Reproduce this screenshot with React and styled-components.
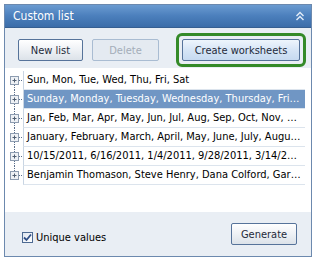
import React from 'react';
import styled, { createGlobalStyle } from 'styled-components';

const GlobalStyle = createGlobalStyle`
  html, body {
    margin: 0;
    padding: 0;
    background: #ffffff;
  }
  body {
    font-family: 'DejaVu Sans Condensed', 'DejaVu Sans', 'Liberation Sans', sans-serif;
    font-size: 11px;
  }
`;

const lists = [
  'Sun, Mon, Tue, Wed, Thu, Fri, Sat',
  'Sunday, Monday, Tuesday, Wednesday, Thursday, Friday, Saturday',
  'Jan, Feb, Mar, Apr, May, Jun, Jul, Aug, Sep, Oct, Nov, Dec',
  'January, February, March, April, May, June, July, August, September',
  '10/15/2011, 6/16/2011, 1/4/2011, 9/28/2011, 3/14/2011, 7/1/2011',
  'Benjamin Thomason, Steve Henry, Dana Colford, Gary Lewis',
];

const TreeNode = ({ first, last }) => (
  <svg width="18" height="19" viewBox="0 0 18 19">
    {!first && (
      <line x1="9.5" y1="0" x2="9.5" y2="5" stroke="#5b6f8c" strokeDasharray="1 1" />
    )}
    {!last && (
      <line x1="9.5" y1="14" x2="9.5" y2="19" stroke="#5b6f8c" strokeDasharray="1 1" />
    )}
    <line x1="14" y1="9.5" x2="18" y2="9.5" stroke="#5b6f8c" strokeDasharray="1 1" />
    <rect x="5.5" y="5.5" width="8" height="8" fill="#eef1f5" stroke="#8d9cb0" />
    <line x1="7.5" y1="9.5" x2="11.5" y2="9.5" stroke="#4f5d70" />
    <line x1="9.5" y1="7.5" x2="9.5" y2="11.5" stroke="#4f5d70" />
  </svg>
);

const CollapseIcon = () => (
  <svg width="10" height="10" viewBox="0 0 10 10">
    <path d="M1.5 5 L5 1.5 L8.5 5" fill="none" stroke="#e3ecf7" strokeWidth="1.4" />
    <path d="M1.5 9 L5 5.5 L8.5 9" fill="none" stroke="#e3ecf7" strokeWidth="1.4" />
  </svg>
);

const App = () => {
  return (
    <>
      <GlobalStyle />
      <Panel>
        <Header>
          <Title>Custom list</Title>
          <CollapseIcon />
        </Header>
        <Toolbar>
          <Button width={65}>New list</Button>
          <Button width={67} disabled>Delete</Button>
          <Highlight>
            <Button width={118} primary>Create worksheets</Button>
          </Highlight>
        </Toolbar>
        <ListArea>
          {lists.map((text, i) => (
            <TreeRow key={i}>
              <TreeNode first={i === 0} last={i === lists.length - 1} />
              <Item selected={i === 1}>{text}</Item>
            </TreeRow>
          ))}
        </ListArea>
        <Footer>
          <CheckLabel>
            <CheckBox>
              <svg width="9" height="9" viewBox="0 0 9 9">
                <path d="M1 4.5 L3.5 7 L8 1.5" fill="none" stroke="#2f4f86" strokeWidth="1.8" />
              </svg>
            </CheckBox>
            Unique values
          </CheckLabel>
          <Button width={66}>Generate</Button>
        </Footer>
      </Panel>
    </>
  );
};

const Panel = styled.div`
  margin: 4px 0 0 4px;
  width: 306px;
  border: 1px solid #6c89ae;
  background: #e9eef4;
  display: flex;
  flex-direction: column;
`;

const Header = styled.div`
  height: 22px;
  padding: 0 6px 0 8px;
  display: flex;
  align-items: center;
  justify-content: space-between;
  background: linear-gradient(to bottom, #6b9bd1 0%, #4b7fbc 50%, #3c6da9 100%);
  border-bottom: 1px solid #365f91;
`;

const Title = styled.span`
  color: #ffffff;
  font-size: 12px;
`;

const Toolbar = styled.div`
  height: 40px;
  padding: 4px 0 0 13px;
  box-sizing: border-box;
  display: flex;
  align-items: center;
  gap: 9px;
`;

const Button = styled.button`
  width: ${props => props.width}px;
  height: 22px;
  padding: 0;
  white-space: nowrap;
  font-family: inherit;
  font-size: 11px;
  color: ${props => (props.disabled ? '#a3adb9' : '#1e2a3a')};
  border: 1px solid ${props => (props.disabled ? '#a9bcd2' : '#56739a')};
  border-radius: 2px;
  background: ${props =>
    props.disabled
      ? '#e4eaf1'
      : props.primary
      ? 'linear-gradient(to bottom, #eef5fc 0%, #d6e5f6 50%, #c6daf1 100%)'
      : 'linear-gradient(to bottom, #ffffff 0%, #eef1f5 50%, #dce2e9 100%)'};
  cursor: default;
`;

const Highlight = styled.span`
  margin-left: 8px;
  padding: 3px;
  border: 3px solid #348a28;
  border-radius: 6px;
  display: flex;
`;

const ListArea = styled.div`
  height: 144px;
  background: #ffffff;
  padding: 3px 6px 0 0;
  box-sizing: border-box;
`;

const TreeRow = styled.div`
  display: flex;
  height: 19px;
`;

const Item = styled.div`
  flex: 1;
  min-width: 0;
  padding: 0 3px;
  line-height: 18px;
  font-size: 11px;
  white-space: nowrap;
  overflow: hidden;
  text-overflow: ellipsis;
  border-left: 1px solid #c9d5e3;
  border-bottom: 1px solid #dce4ed;
  color: ${props => (props.selected ? '#ffffff' : '#000000')};
  background: ${props => (props.selected ? '#7096c4' : 'transparent')};
`;

const Footer = styled.div`
  height: 44px;
  padding: 0 14px 0 17px;
  display: flex;
  align-items: center;
  justify-content: space-between;
`;

const CheckLabel = styled.label`
  display: flex;
  align-items: center;
  gap: 3px;
  margin-top: 7px;
  font-size: 11px;
  color: #000000;
`;

const CheckBox = styled.span`
  width: 11px;
  height: 11px;
  box-sizing: border-box;
  border: 1px solid #4d6a92;
  background: linear-gradient(to bottom right, #dfe6ef, #ffffff);
  display: flex;
  align-items: center;
  justify-content: center;
`;

export default App;
